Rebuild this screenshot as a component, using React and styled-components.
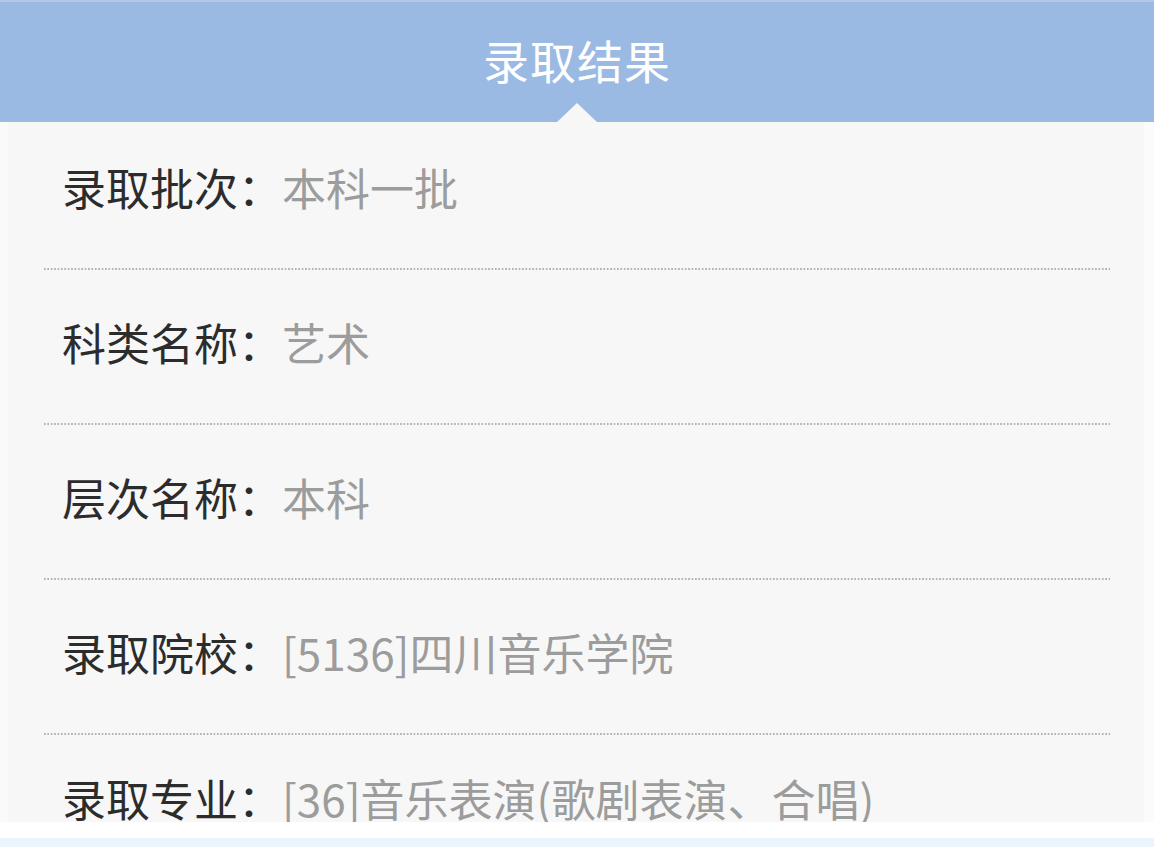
import React from "react";
import styled, { createGlobalStyle } from "styled-components";

const Global = createGlobalStyle`
  html, body {
    margin: 0;
    padding: 0;
    background: #f7f7f7;
    font-family: "Noto Sans CJK SC", "Noto Sans", sans-serif;
  }
`;

const Page = styled.div`
  width: 1154px;
  height: 847px;
  display: flex;
  flex-direction: column;
  overflow: hidden;
`;

const Header = styled.div`
  position: relative;
  height: 120px;
  border-top: 2px solid #b2c9e9;
  background: #9bbae3;
  display: flex;
  align-items: center;
  justify-content: center;
  flex-shrink: 0;

  &::after {
    content: "";
    position: absolute;
    left: 557px;
    bottom: 0;
    border-left: 20px solid transparent;
    border-right: 20px solid transparent;
    border-bottom: 19px solid #f7f7f7;
  }
`;

const Title = styled.h1`
  margin: 0 0 6px;
  font-size: 46px;
  font-weight: 400;
  color: #ffffff;
  letter-spacing: 1px;
`;

const Content = styled.div`
  height: 700px;
  overflow: hidden;
  padding: 0 34px 0 36px;
  background: #f7f7f7;
  border-left: 8px solid #fafafa;
  border-right: 10px solid #fbfbfb;
  box-sizing: border-box;
  flex-shrink: 0;
`;

const Row = styled.div`
  display: flex;
  align-items: center;
  height: 60px;
  padding: ${(p) => (p.first ? "35px" : p.last ? "33px" : "42px")} 0
    ${(p) => (p.last ? "0" : "53px")} 18px;
  font-size: 44px;
  background-image: ${(p) =>
    p.last ? "none" : "linear-gradient(to right, #b3b3b3 55%, transparent 55%)"};
  background-size: 3.4px 2px;
  background-repeat: repeat-x;
  background-position: left bottom;
`;

const Label = styled.span`
  color: #2c2c2c;
  white-space: nowrap;
`;

const Value = styled.span`
  color: #9c9c9c;
  white-space: nowrap;
`;

const FooterWhite = styled.div`
  height: 16px;
  background: #ffffff;
  flex-shrink: 0;
`;

const FooterBlue = styled.div`
  flex: 1;
  background: #ebf3fc;
`;

const rows = [
  ["录取批次：", "本科一批"],
  ["科类名称：", "艺术"],
  ["层次名称：", "本科"],
  ["录取院校：", "[5136]四川音乐学院"],
  ["录取专业：", "[36]音乐表演(歌剧表演、合唱)"],
];

export default function App() {
  return (
    <Page>
      <Global />
      <Header>
        <Title>录取结果</Title>
      </Header>
      <Content>
        {rows.map(([label, value], i) => (
          <Row key={label} first={i === 0} last={i === rows.length - 1}>
            <Label>{label}</Label>
            <Value>{value}</Value>
          </Row>
        ))}
      </Content>
      <FooterWhite />
      <FooterBlue />
    </Page>
  );
}
